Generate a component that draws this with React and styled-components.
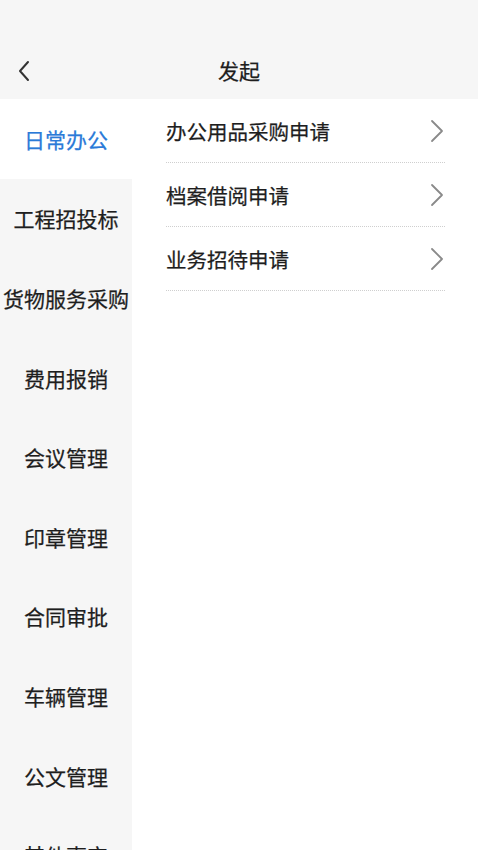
import React from "react";
import styled, { createGlobalStyle } from "styled-components";

const Global = createGlobalStyle`
  html, body { margin: 0; padding: 0; background: #fff; }
  body { font-family: "Noto Sans CJK SC", "Noto Sans", sans-serif; color: #1e1e1e; }
  * { box-sizing: border-box; }
`;

const Page = styled.div`
  width: 478px;
  height: 850px;
  overflow: hidden;
  display: flex;
  flex-direction: column;
`;

const Header = styled.div`
  height: 99px;
  background: #f6f6f6;
  display: flex;
  align-items: flex-end;
  flex-shrink: 0;
`;

const NavBar = styled.div`
  height: 56px;
  width: 100%;
  display: grid;
  grid-template-columns: 60px 1fr 60px;
  align-items: center;
`;

const Back = styled.div`
  display: flex;
  align-items: center;
  padding-left: 17px;
  height: 100%;
`;

const Title = styled.div`
  text-align: center;
  font-size: 21px;
  color: #1e1e1e;
  line-height: 1;
  padding-bottom: 2px;
  -webkit-text-stroke: 0.25px #1e1e1e;
`;

const Body = styled.div`
  flex: 1;
  display: flex;
  min-height: 0;
`;

const Side = styled.div`
  width: 132px;
  background: #f6f6f6;
  display: flex;
  flex-direction: column;
  flex-shrink: 0;
`;

const SideItem = styled.div`
  height: 79.6px;
  flex-shrink: 0;
  display: flex;
  align-items: center;
  justify-content: center;
  font-size: 21px;
  white-space: nowrap;
  background: ${p => (p.$active ? "#fff" : "transparent")};
  color: ${p => (p.$active ? "#2a7ad8" : "#1e1e1e")};
  -webkit-text-stroke: 0.25px ${p => (p.$active ? "#2a7ad8" : "#1e1e1e")};
`;

const List = styled.div`
  flex: 1;
  padding: 0 33px 0 34px;
`;

const Row = styled.div`
  height: 64px;
  display: flex;
  align-items: center;
  justify-content: space-between;
  border-bottom: 1px dotted #cfcfcf;
  font-size: 20.5px;
  color: #1e1e1e;
  -webkit-text-stroke: 0.25px #1e1e1e;
`;

const Chevron = () => (
  <svg width="14" height="24" viewBox="0 0 14 24" style={{ marginRight: 1 }}>
    <path d="M2 2 L12 12 L2 22" fill="none" stroke="#8a8a8a" strokeWidth="1.8" strokeLinecap="round" strokeLinejoin="round" />
  </svg>
);

const BackIcon = () => (
  <svg width="14" height="22" viewBox="0 0 14 22">
    <path d="M11 2 L3 11 L11 20" fill="none" stroke="#333" strokeWidth="2" strokeLinecap="round" strokeLinejoin="round" />
  </svg>
);

const cats = ["日常办公", "工程招投标", "货物服务采购", "费用报销", "会议管理", "印章管理", "合同审批", "车辆管理", "公文管理", "其他事宜"];
const items = ["办公用品采购申请", "档案借阅申请", "业务招待申请"];

export default function App() {
  return (
    <Page>
      <Global />
      <Header>
        <NavBar>
          <Back><BackIcon /></Back>
          <Title>发起</Title>
          <div />
        </NavBar>
      </Header>
      <Body>
        <Side>
          {cats.map((c, i) => (
            <SideItem key={c} $active={i === 0}>{c}</SideItem>
          ))}
        </Side>
        <List>
          {items.map(t => (
            <Row key={t}>
              <span>{t}</span>
              <Chevron />
            </Row>
          ))}
        </List>
      </Body>
    </Page>
  );
}
